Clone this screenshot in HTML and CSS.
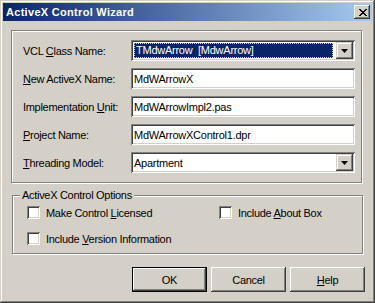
FILE: index.html
```html
<!DOCTYPE html>
<html>
<head>
<title>ActiveX Control Wizard</title>
<meta charset="utf-8">
<link rel="stylesheet" href="styles.css">
</head>
<body>
<div class="window">
	<div class="titlebar">
		<span class="title">ActiveX Control Wizard</span>
		<span class="close">
			<svg width="8" height="7" viewBox="0 0 8 7" shape-rendering="crispEdges">
				<path d="M0 0h2v1h-2zM6 0h2v1h-2zM1 1h2v1h-2zM5 1h2v1h-2zM2 2h4v1h-4zM3 3h2v1h-2zM2 4h4v1h-4zM1 5h2v1h-2zM5 5h2v1h-2zM0 6h2v1h-2zM6 6h2v1h-2z" fill="#000"/>
			</svg>
		</span>
	</div>
	<div class="panel">
		<div class="row">
			<label>VCL <u>C</u>lass Name:</label>
			<div class="field combo">
				<span class="selected">TMdwArrow&nbsp;&nbsp;[MdwArrow]</span>
				<span class="drop"><svg width="7" height="4" viewBox="0 0 7 4"><polygon points="0,0 7,0 3.5,4" fill="#000"/></svg></span>
			</div>
		</div>
		<div class="row">
			<label><u>N</u>ew ActiveX Name:</label>
			<div class="field"><span>MdWArrowX</span></div>
		</div>
		<div class="row">
			<label>Implementation <u>U</u>nit:</label>
			<div class="field"><span>MdWArrowImpl2.pas</span></div>
		</div>
		<div class="row">
			<label><u>P</u>roject Name:</label>
			<div class="field"><span>MdWArrowXControl1.dpr</span></div>
		</div>
		<div class="row">
			<label><u>T</u>hreading Model:</label>
			<div class="field combo">
				<span class="value">Apartment</span>
				<span class="drop"><svg width="7" height="4" viewBox="0 0 7 4"><polygon points="0,0 7,0 3.5,4" fill="#000"/></svg></span>
			</div>
		</div>
	</div>
	<fieldset class="group">
		<legend>ActiveX Control Options</legend>
		<div class="checks">
			<div class="check"><span class="box"></span><span>Make Control <u>L</u>icensed</span></div>
			<div class="check"><span class="box"></span><span>Include <u>A</u>bout Box</span></div>
			<div class="check"><span class="box"></span><span>Include <u>V</u>ersion Information</span></div>
		</div>
	</fieldset>
	<div class="buttons">
		<div class="btn default">OK</div>
		<div class="btn">Cancel</div>
		<div class="btn"><span><u>H</u>elp</span></div>
	</div>
</div>
</body>
</html>
```

FILE: styles.css
```css
body {
	margin: 0;
	background: #d4d0c8;
	font-family: "Liberation Sans", Arial, sans-serif;
	font-size: 11px;
	letter-spacing: -0.3px;
	color: #000;
}
u {
	text-decoration-thickness: 1px;
	text-underline-offset: 1px;
}
.window {
	width: 375px;
	height: 303px;
	box-sizing: border-box;
	padding: 3px;
	background: #d4d0c8;
	box-shadow: inset -1px -1px #404040, inset 1px 1px #d4d0c8, inset -2px -2px #808080, inset 2px 2px #fff;
	display: flex;
	flex-direction: column;
}
.titlebar {
	height: 18px;
	flex: none;
	display: flex;
	align-items: center;
	padding: 0 2px;
	background: linear-gradient(to right, #0a246a, #a6caf0);
	color: #fff;
	font-weight: bold;
	letter-spacing: 0.3px;
}
.title {
	flex: 1;
	padding-left: 1px;
}
.close {
	width: 16px;
	height: 14px;
	background: #d4d0c8;
	box-shadow: inset -1px -1px #404040, inset 1px 1px #fff, inset -2px -2px #808080;
	display: flex;
	align-items: center;
	justify-content: center;
	padding-left: 1px;
	box-sizing: border-box;
}
.close svg {
	display: block;
}
.panel {
	margin: 9px 0 0 8px;
	width: 351px;
	height: 153px;
	box-sizing: border-box;
	padding: 9px 0 0 11px;
	border: 1px solid #808080;
	box-shadow: 1px 1px 0 #fff, inset 1px 1px 0 #fff;
}
.row {
	display: flex;
	align-items: center;
	height: 21px;
	margin-bottom: 7px;
}
.row label {
	width: 108px;
}
.field {
	width: 224px;
	height: 21px;
	box-sizing: border-box;
	background: #fff;
	box-shadow: inset 1px 1px #808080, inset -1px -1px #fff, inset 2px 2px #404040, inset -2px -2px #d4d0c8;
	padding: 0 3px;
	display: flex;
	align-items: center;
	letter-spacing: -0.25px;
}
.combo {
	padding: 0 2px 0 3px;
}
.selected {
	flex: 1;
	height: 15px;
	line-height: 15px;
	background: #0a246a;
	color: #fff;
	padding-left: 2px;
	outline: 1px dotted #d4d0c8;
	outline-offset: -1px;
	margin-right: 3px;
}
.value {
	flex: 1;
}
.drop {
	width: 17px;
	height: 17px;
	box-sizing: border-box;
	background: #d4d0c8;
	box-shadow: inset -1px -1px #404040, inset 1px 1px #d4d0c8, inset -2px -2px #808080, inset 2px 2px #fff;
	display: flex;
	align-items: center;
	justify-content: center;
}
.drop svg {
	display: block;
}
.group {
	margin: 6px 0 0 9px;
	width: 351px;
	height: 65px;
	box-sizing: border-box;
	padding: 0;
	border: 1px solid #808080;
	box-shadow: 1px 1px 0 #fff, inset 1px 1px 0 #fff;
}
.group legend {
	margin-left: 7px;
	padding: 0 2px;
	line-height: 13px;
	background: #d4d0c8;
}
.checks {
	display: grid;
	grid-template-columns: 192px auto;
	row-gap: 11px;
	padding: 3px 0 0 14px;
}
.check {
	display: flex;
	align-items: center;
	height: 15px;
}
.box {
	width: 13px;
	height: 13px;
	flex: none;
	box-sizing: border-box;
	background: #fff;
	box-shadow: inset 1px 1px #808080, inset -1px -1px #fff, inset 2px 2px #404040, inset -2px -2px #d4d0c8;
	margin-right: 6px;
}
.buttons {
	display: flex;
	justify-content: flex-end;
	gap: 4px;
	margin-top: 13px;
	padding-right: 7px;
}
.btn {
	width: 75px;
	height: 25px;
	box-sizing: border-box;
	display: flex;
	align-items: center;
	justify-content: center;
	background: #d4d0c8;
	box-shadow: inset -1px -1px #404040, inset 1px 1px #fff, inset -2px -2px #808080, inset 2px 2px #d4d0c8;
}
.btn.default {
	box-shadow: inset 0 0 0 1px #000, inset -2px -2px #404040, inset 2px 2px #fff, inset -3px -3px #808080;
}
```
